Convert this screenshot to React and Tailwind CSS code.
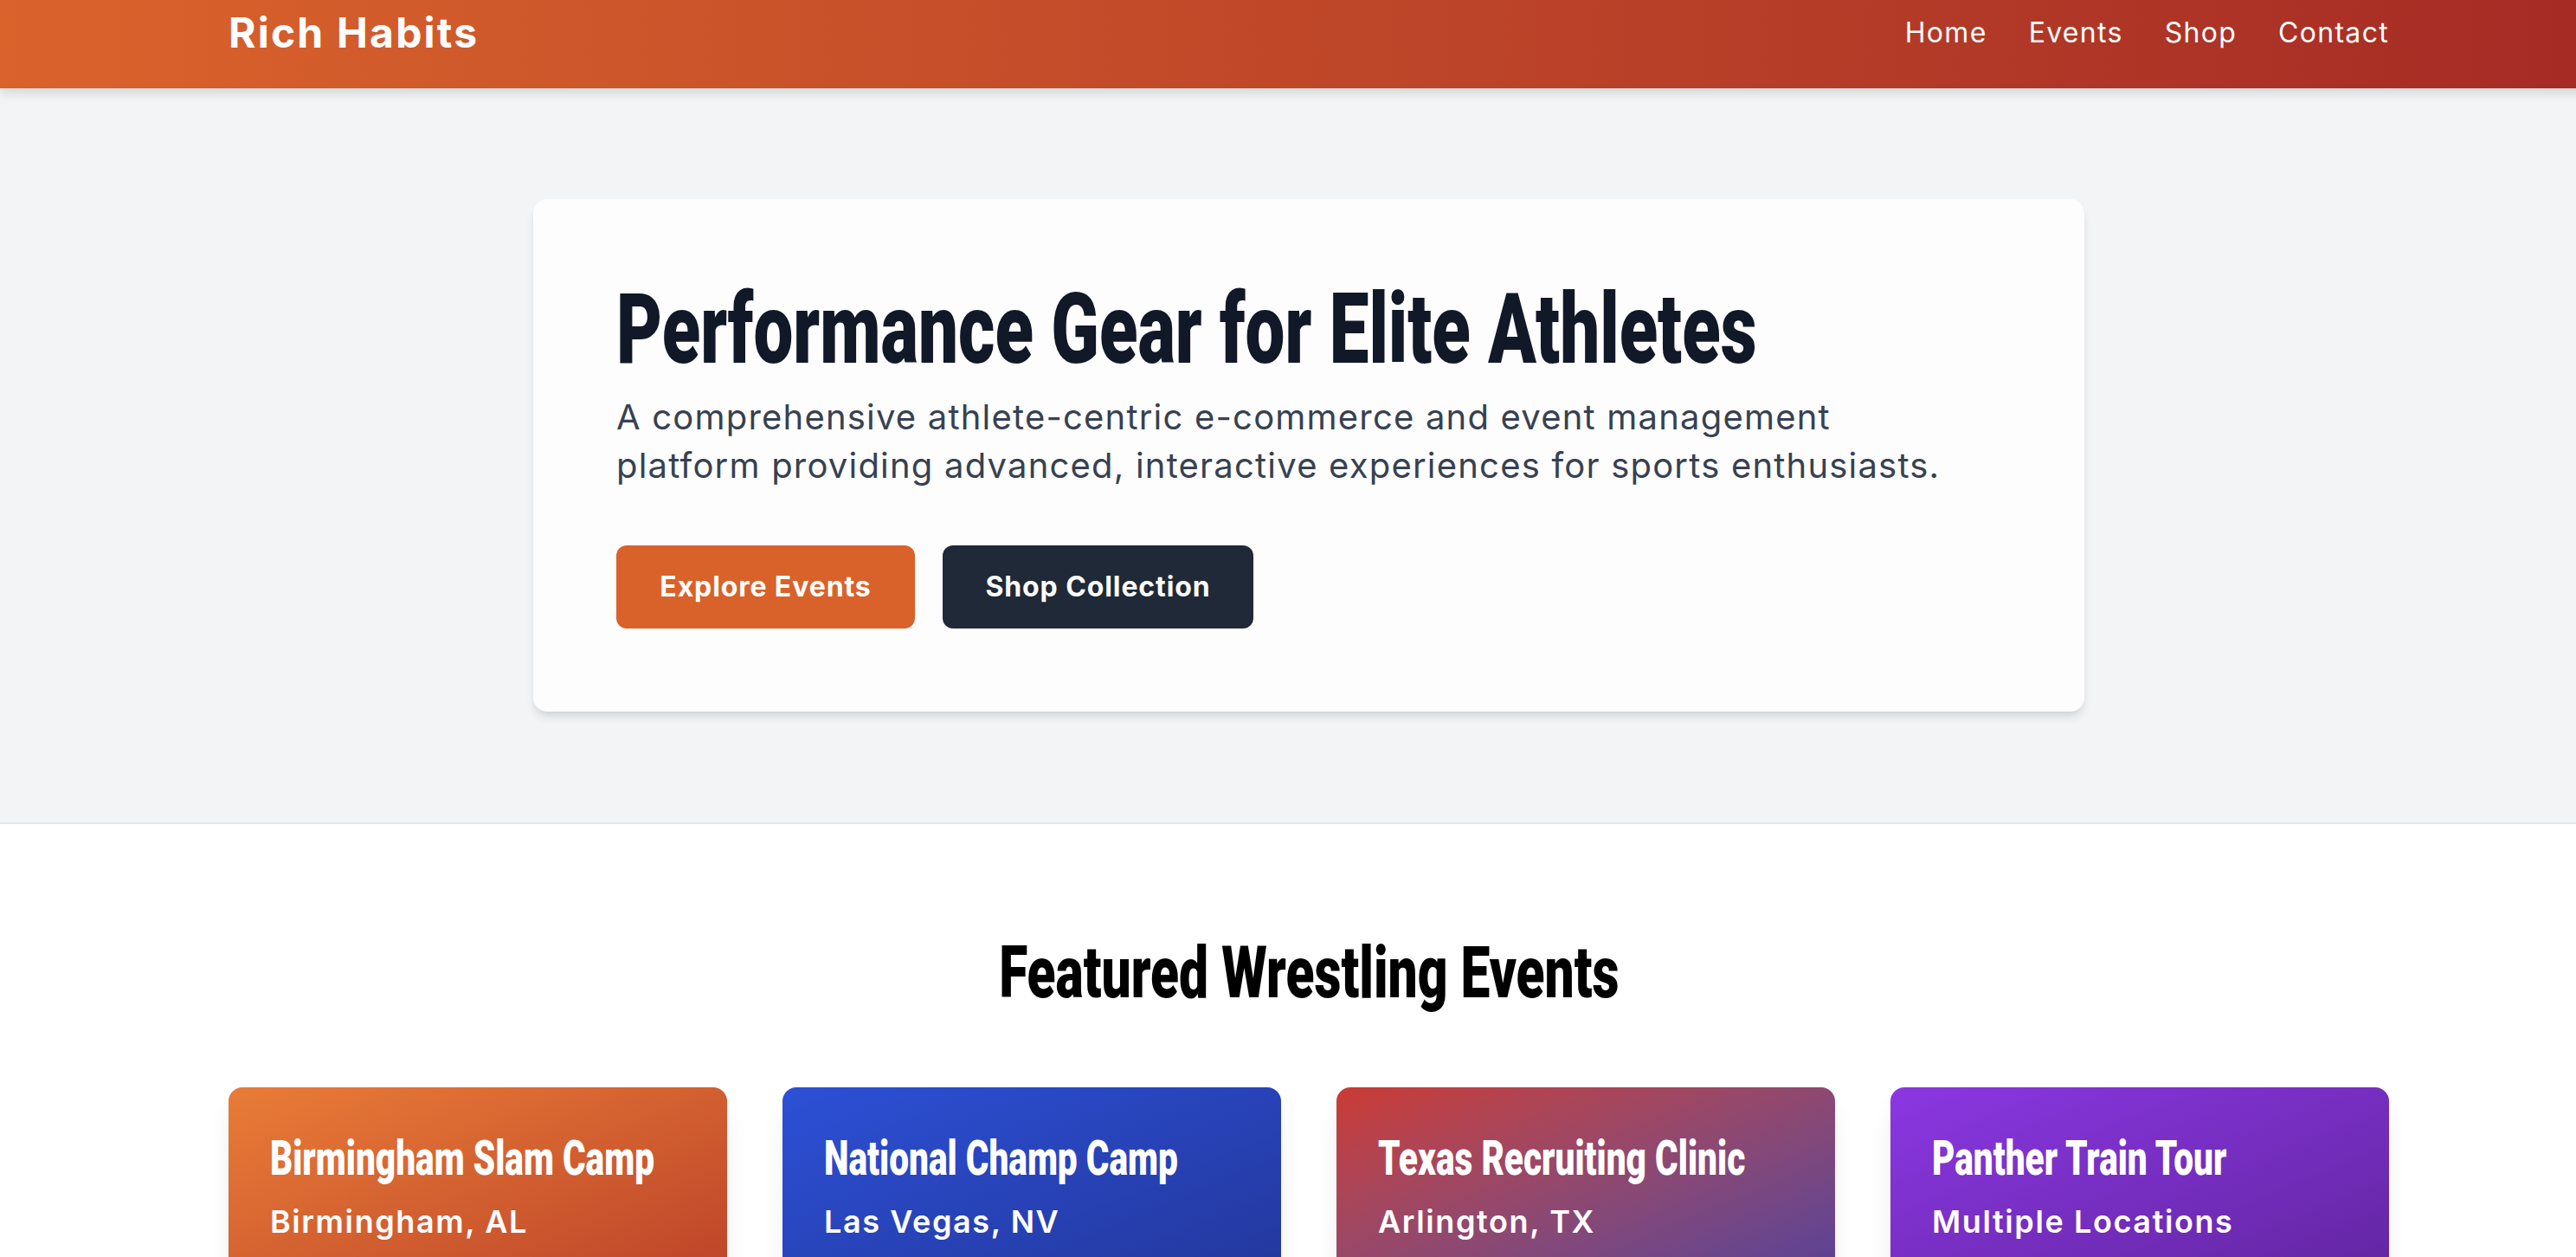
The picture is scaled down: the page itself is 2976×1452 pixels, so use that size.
import React from "react";

const events = [
  { title: "Birmingham Slam Camp", loc: "Birmingham, AL", cls: "from-[#e97c37] to-[#bb4129]" },
  { title: "National Champ Camp", loc: "Las Vegas, NV", cls: "from-[#2c50d6] to-[#23369a]" },
  { title: "Texas Recruiting Clinic", loc: "Arlington, TX", cls: "from-[#cb3a32] to-[#523f9c]" },
  { title: "Panther Train Tour", loc: "Multiple Locations", cls: "from-[#8b37e2] to-[#61259f]" },
];

export default function App() {
  return (
    <div className="w-full overflow-hidden bg-white">
      <div className="w-[3024px] font-['Inter','Open_Sans',sans-serif]">
        <header className="relative z-10 h-[102px] bg-linear-to-r from-[#da632c] to-[#a52a25] shadow-[0_6px_12px_rgba(0,0,0,0.12)]">
          <div className="mx-auto flex h-[76px] w-[2560px] items-center justify-between px-[32px]">
            <div className="text-[48px] font-bold leading-[64px] tracking-[2.2px] text-white">Rich Habits</div>
            <nav className="flex items-center gap-[48px] text-[32px] leading-[48px] tracking-[1.3px] text-white">
              <a>Home</a>
              <a>Events</a>
              <a>Shop</a>
              <a>Contact</a>
            </nav>
          </div>
        </header>

        <section className="border-b-2 border-[#e5e7eb] bg-[#f3f4f6] py-[128px]">
          <div className="mx-auto w-[1792px] rounded-[16px] bg-[#fdfdfd] p-[96px] shadow-[0_8px_12px_-2px_rgba(0,0,0,0.1),0_4px_8px_-4px_rgba(0,0,0,0.1)]">
            <h1 className="mb-[20px] origin-left scale-x-[0.716] whitespace-nowrap font-['Roboto',sans-serif] text-[114px] font-black leading-[108px] text-[#111827]">
              Performance Gear for Elite Athletes
            </h1>
            <p className="mb-[64px] text-[40px] leading-[56px] tracking-[1.2px] text-[#374151]">
              <span className="block whitespace-nowrap">A comprehensive athlete-centric e-commerce and event management</span>
              <span className="block whitespace-nowrap">platform providing advanced, interactive experiences for sports enthusiasts.</span>
            </p>
            <div className="flex gap-[32px]">
              <button className="flex h-[96px] w-[345px] items-center justify-center rounded-[12px] bg-[#d9622b] text-[32px] font-bold tracking-[0.9px] text-white">
                Explore Events
              </button>
              <button className="flex h-[96px] w-[359px] items-center justify-center rounded-[12px] bg-[#1f2937] text-[32px] font-bold tracking-[0.9px] text-white">
                Shop Collection
              </button>
            </div>
          </div>
        </section>

        <section className="bg-white py-[128px]">
          <div className="mx-auto w-[2560px] px-[32px]">
            <div className="mb-[88px] text-center">
              <h2 className="inline-block origin-center scale-x-[0.729] whitespace-nowrap font-['Roboto',sans-serif] text-[83px] font-black leading-[88px] text-black">
                Featured Wrestling Events
              </h2>
            </div>
            <div className="grid grid-cols-4 gap-[64px]">
              {events.map((e) => (
                <div
                  key={e.title}
                  className={`min-h-[240px] rounded-[16px] bg-linear-to-br ${e.cls} p-[48px] text-white shadow-[0_20px_30px_-6px_rgba(0,0,0,0.1),0_8px_12px_-8px_rgba(0,0,0,0.1)]`}
                >
                  <h3 className="mb-[11px] origin-left scale-x-[0.725] whitespace-nowrap font-['Roboto',sans-serif] text-[56px] font-black leading-[68px]">
                    {e.title}
                  </h3>
                  <p className="text-[36px] font-semibold leading-[56px] tracking-[1.6px]">{e.loc}</p>
                </div>
              ))}
            </div>
          </div>
        </section>
      </div>
    </div>
  );
}
